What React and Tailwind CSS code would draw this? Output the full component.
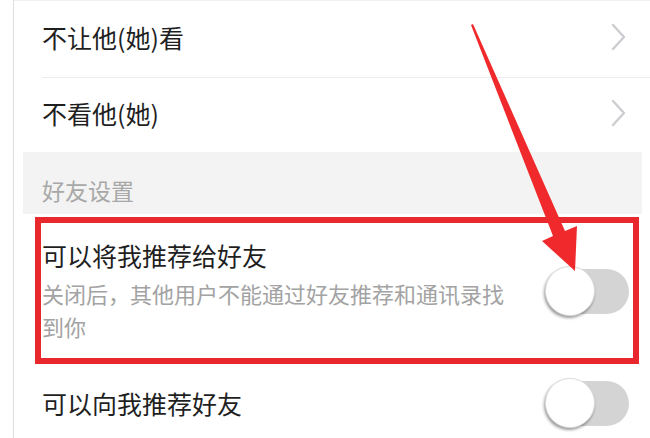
import React from "react";

const Chevron = () => (
  <svg width="16" height="28" viewBox="0 0 16 28" className="shrink-0">
    <polyline
      points="3,2 14,14 3,26"
      fill="none"
      stroke="#cdcdd1"
      strokeWidth="2.4"
      strokeLinecap="round"
      strokeLinejoin="round"
    />
  </svg>
);

const Toggle = () => (
  <div className="relative flex items-center w-[84px] h-[50px] shrink-0">
    {/* Track */}
    <div className="absolute right-0 w-[80px] h-[45px] rounded-full bg-[#d4d4d4]" />
    {/* Knob */}
    <div className="relative w-[50px] h-[50px] rounded-full bg-white border border-[#dcdcdc] shadow-[-1px_2px_3px_rgba(0,0,0,0.4)]" />
  </div>
);

const LinkRow = ({ label, height }) => (
  <div className={`flex items-center justify-between pl-[28px] pr-[24px] pb-[4px] ${height}`}>
    <span className="text-[25px] leading-[30px] text-[#1f1f1f]">{label}</span>
    <Chevron />
  </div>
);

export default function App() {
  return (
    <div
      className="relative w-[650px] h-[438px] overflow-hidden bg-white pl-[13px]"
      style={{ fontFamily: '"Noto Sans CJK SC", "Noto Sans", sans-serif' }}
    >
      <div className="h-full border-l border-[#dedede] flex flex-col">
        <div className="h-px bg-[#efefef]" />
        <LinkRow label="不让他(她)看" height="h-[76px]" />
        <div className="ml-[28px] h-px bg-[#ececec]" />
        <LinkRow label="不看他(她)" height="h-[75px]" />

        {/* Section header */}
        <div className="ml-[9px] mr-[8px] h-[62px] bg-[#f3f3f3] pl-[19px] pt-[23px]">
          <span className="text-[23px] leading-[30px] text-[#a8a8a8]">好友设置</span>
        </div>

        {/* Recommend me to friends */}
        <div className="flex items-center justify-between h-[155px] pl-[28px] pr-[21px]">
          <div className="flex flex-col">
            <span className="text-[25px] leading-[30px] text-[#1f1f1f]">可以将我推荐给好友</span>
            <span className="mt-[7px] w-[470px] text-[22px] leading-[33px] text-[#a3a3a3]">
              关闭后，其他用户不能通过好友推荐和通讯录找到你
            </span>
          </div>
          <Toggle />
        </div>

        {/* Recommend friends to me */}
        <div className="flex items-center justify-between h-[70px] pl-[28px] pr-[21px]">
          <span className="text-[25px] leading-[30px] text-[#1f1f1f]">可以向我推荐好友</span>
          <Toggle />
        </div>
      </div>

      {/* Annotation: red box */}
      <div className="absolute left-[35px] top-[217px] w-[604px] h-[147px] border-[6px] border-[#e8282d] pointer-events-none" />

      {/* Annotation: red arrow */}
      <svg
        className="absolute left-0 top-0 pointer-events-none"
        width="650"
        height="438"
        viewBox="0 0 650 438"
      >
        <polygon
          points="471,25 473,24 565,231 577,226 575,271 542,241 553,236"
          fill="#f02a2c"
        />
      </svg>
    </div>
  );
}
